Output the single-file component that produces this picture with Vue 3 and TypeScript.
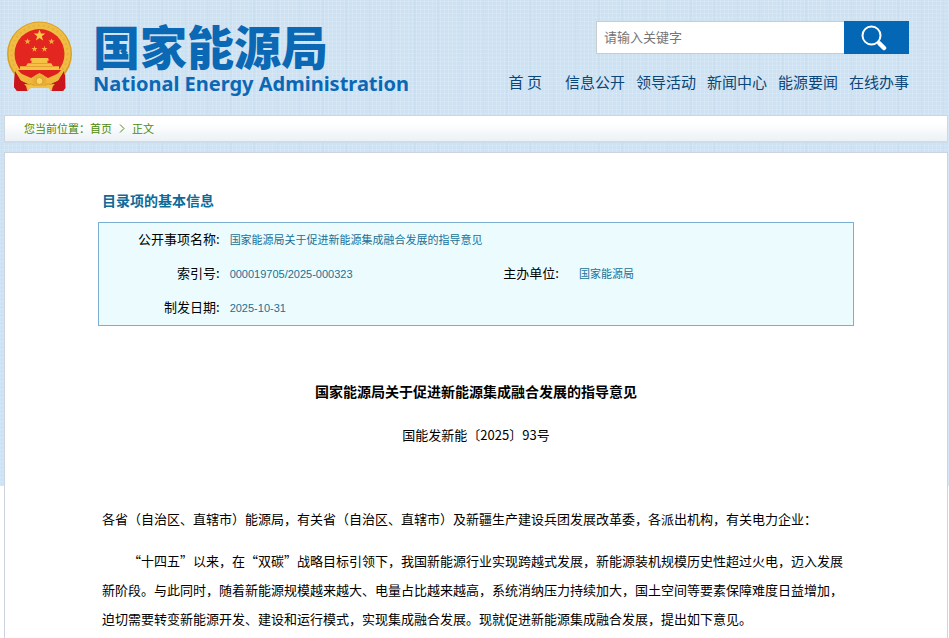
<script setup lang="ts">
import { ref } from 'vue'

interface Fact {
  label: string
  value: string
}

const keyword = ref('')

const navItems: string[] = ['首 页', '信息公开', '领导活动', '新闻中心', '能源要闻', '在线办事']

const factRows: Fact[][] = [
  [{ label: '公开事项名称:', value: '国家能源局关于促进新能源集成融合发展的指导意见' }],
  [
    { label: '索引号:', value: '000019705/2025-000323' },
    { label: '主办单位:', value: '国家能源局' },
  ],
  [{ label: '制发日期:', value: '2025-10-31' }],
]

const star = 'M0 -10 L2.4 -3.2 L9.5 -3.1 L3.8 1.2 L5.9 8.1 L0 4 L-5.9 8.1 L-3.8 1.2 L-9.5 -3.1 L-2.4 -3.2 Z'
const smallStars = [
  { x: 20.5, y: 20.5 },
  { x: 44.5, y: 20.5 },
  { x: 27.5, y: 28 },
  { x: 37.5, y: 28 },
]
</script>

<template>
  <div class="page" lang="zh-CN">
    <header class="header">
      <a class="brand" href="#">
        <svg class="emblem" viewBox="0 0 66 72" aria-hidden="true">
          <path d="M8 50 L58 50 L58.500 67 L56 70 L47 70 L45 67 L21 67 L19 70 L10 70 L7 66 Z" fill="#c9151b" />
          <path d="M12 55 L11 69 M17 59 L16 69 M54 55 L55 69 M49 59 L50 69" stroke="#97140f" stroke-width="1" />
          <circle cx="32.500" cy="33" r="32.500" fill="#d9a12a" />
          <circle cx="32.500" cy="32.500" r="31" fill="#f0bd43" />
          <circle cx="32.500" cy="32.500" r="28" fill="none" stroke="#e6b03c" stroke-width="2" stroke-dasharray="2 3" />
          <circle cx="32.500" cy="33" r="25" fill="#e3261f" />
          <path :d="star" transform="translate(32.5 14.5) scale(.61)" fill="#f7cd46" />
          <path
            v-for="(s, i) in smallStars"
            :key="i"
            :d="star"
            :transform="`translate(${s.x} ${s.y}) scale(.33)`"
            fill="#f7b23c"
          />
          <path d="M24 37 H41 L42 39.500 H40.500 V42 H44 L46 45 H52 V49 H13 V45 H19 L21 42 H24.500 V39.500 H23 Z" fill="#f5c246" />
          <path d="M13 45.500 H52 M21 42.500 H44" stroke="#e3a035" stroke-width="1" />
          <path d="M11 49 H54 L49 56 L41 60 H24 L16 56 Z" fill="#dc211d" />
          <path d="M9 48 L15 53 L24 57 L32.500 52 L41 57 L50 53 L56 48 L52 59 L43 63 L39 61 L26 61 L22 63 L13 59 Z" fill="#efb83d" />
          <path d="M8 50 L14 60 L23 64 L21 70 L10 70 L7 66 Z M57 50 L51 60 L42 64 L44 70 L56 70 L58 66 Z" fill="#c9151b" />
          <circle cx="32.500" cy="60" r="7" fill="#e9ad34" />
          <circle cx="32.500" cy="60" r="3.500" fill="#f8d764" stroke="#dc9b2e" stroke-width="1" />
          <path d="M17 63 Q25 63 28 65 H37 Q40 63 48 63 Q45 65 45 70 L41 67 H24 L20 70 Q20 65 17 63 Z" fill="#f2c044" />
        </svg>
        <span class="brand-text">
          <strong class="brand-name">国家能源局</strong>
          <span class="brand-en">National Energy Administration</span>
        </span>
      </a>

      <div class="tools">
        <form class="search" role="search" @submit.prevent>
          <input v-model="keyword" class="search-input" type="text" placeholder="请输入关键字" aria-label="请输入关键字" />
          <button class="search-button" type="submit" aria-label="搜索">
            <svg class="search-icon" viewBox="0 0 26 26" aria-hidden="true">
              <circle cx="10.500" cy="10.500" r="9" fill="none" stroke="#fff" stroke-width="2" />
              <path d="M17 17 L19 19" stroke="#fff" stroke-width="2" />
              <path d="M18.500 18.500 L23 23" stroke="#fff" stroke-width="4.500" stroke-linecap="round" />
            </svg>
          </button>
        </form>
        <nav class="nav">
          <a v-for="item in navItems" :key="item" class="nav-link" href="#">{{ item }}</a>
        </nav>
      </div>
    </header>

    <div class="crumbs">
      <span>您当前位置：</span><a href="#">首页</a>
      <svg class="crumb-sep" viewBox="0 0 6 9" aria-hidden="true">
        <path d="M1 0.500 L5 4.500 L1 8.500" fill="none" stroke="currentColor" />
      </svg>
      <a href="#">正文</a>
    </div>

    <main class="panel">
      <h2 class="section-title">目录项的基本信息</h2>
      <table class="facts">
        <colgroup>
          <col class="col-label" />
          <col class="col-value" />
          <col class="col-label-second" />
          <col />
        </colgroup>
        <tbody>
          <tr v-for="(row, r) in factRows" :key="r">
            <template v-for="fact in row" :key="fact.label">
              <th scope="row">{{ fact.label }}</th>
              <td :colspan="row.length === 1 ? 3 : 1">{{ fact.value }}</td>
            </template>
          </tr>
        </tbody>
      </table>

      <article class="article">
        <h1 class="article-title">国家能源局关于促进新能源集成融合发展的指导意见</h1>
        <p class="doc-number">国能发新能〔2025〕93号</p>
        <p class="addressee">各省（自治区、直辖市）能源局，有关省（自治区、直辖市）及新疆生产建设兵团发展改革委，各派出机构，有关电力企业：</p>
        <p class="paragraph">“十四五”以来，在“双碳”战略目标引领下，我国新能源行业实现跨越式发展，新能源装机规模历史性超过火电，迈入发展新阶段。与此同时，随着新能源规模越来越大、电量占比越来越高，系统消纳压力持续加大，国土空间等要素保障难度日益增加，迫切需要转变新能源开发、建设和运行模式，实现集成融合发展。现就促进新能源集成融合发展，提出如下意见。</p>
      </article>
    </main>
  </div>
</template>

<style>
body {
  margin: 0;
  background: #fff;
}
</style>

<style scoped>
.page {
  box-sizing: border-box;
  display: flex;
  flex-direction: column;
  min-height: 100vh;
  padding: 0 1px 0 4px;
  font-family: "Noto Sans CJK SC", "Liberation Sans", sans-serif;
  font-size: 13px;
  color: #000;
  text-spacing-trim: space-all;
  background:
    repeating-linear-gradient(90deg, rgba(255, 255, 255, 0.14) 0 1px, transparent 1px 4px),
    repeating-linear-gradient(0deg, rgba(255, 255, 255, 0.12) 0 1px, transparent 1px 4px),
    repeating-linear-gradient(90deg, rgba(150, 190, 225, 0.08) 0 2px, transparent 2px 23px),
    linear-gradient(#cee1f1, #cce4f7);
  background-size: 100% 486px;
  background-repeat: no-repeat;
}

a {
  color: inherit;
  text-decoration: none;
}

.header {
  display: flex;
  justify-content: space-between;
  align-items: flex-start;
  box-sizing: border-box;
  height: 115px;
  padding: 21px 39px 0 3px;
}

.brand {
  display: flex;
  gap: 20px;
  color: #0a68b5;
}

.emblem {
  width: 66px;
  height: 72px;
}

.brand-text {
  display: flex;
  flex-direction: column;
}

.brand-name {
  font-size: 47px;
  font-weight: 900;
  line-height: 48px;
}

.brand-en {
  font-family: "Noto Sans", "Liberation Sans", sans-serif;
  font-size: 20px;
  font-weight: 700;
  line-height: 30px;
  white-space: nowrap;
}

.tools {
  display: flex;
  flex-direction: column;
  align-items: flex-end;
  gap: 17px;
}

.search {
  display: flex;
}

.search-input {
  box-sizing: border-box;
  width: 248px;
  height: 33px;
  padding: 0 7px 2px;
  border: 1px solid #c8cdd2;
  border-right: 0;
  border-radius: 0;
  font: inherit;
  background: #fff;
  outline: none;
}

.search-input::placeholder {
  color: #757575;
  opacity: 1;
}

.search-button {
  display: flex;
  align-items: center;
  justify-content: center;
  width: 65px;
  height: 33px;
  padding: 0 5px 0 0;
  border: 0;
  background: #0467b5;
  cursor: pointer;
}

.search-icon {
  width: 26px;
  height: 26px;
}

.nav {
  display: flex;
  gap: 11px;
  font-size: 15px;
  line-height: 22px;
  color: #0b4678;
  white-space: nowrap;
}

.nav-link:first-child {
  padding-right: 12px;
}

.crumbs {
  display: flex;
  align-items: center;
  padding: 0 19px;
  border: 1px solid #cfd6e2;
  border-bottom: 2px solid #cddcea;
  font-size: 11px;
  line-height: 25px;
  color: #4a8a08;
  background: linear-gradient(#fff 30%, #ebf1f5);
}

.crumb-sep {
  width: 6px;
  height: 9px;
  margin: 0 7px;
}

.panel {
  flex: 1;
  margin-top: 9px;
  padding: 35px 93px 0;
  border: 1px solid #cdd3df;
  border-bottom: 0;
  background: #fff;
}

.section-title {
  margin: 0 4px 10px;
  font-size: 14px;
  line-height: 24px;
  color: #0f6a98;
}

.facts {
  width: 100%;
  table-layout: fixed;
  border: 1px solid #7aaed2;
  border-collapse: separate;
  border-spacing: 0;
  background: #ecfcfe;
}

.col-label {
  width: 16%;
}

.col-value {
  width: 36%;
}

.col-label-second {
  width: 9%;
}

.facts th,
.facts td {
  box-sizing: border-box;
  height: 34px;
  padding: 0;
  text-align: left;
  font-weight: 400;
  line-height: 20px;
  white-space: nowrap;
}

.facts th {
  padding-bottom: 2px;
  text-align: right;
}

.facts td {
  padding-left: 10px;
  font-family: "Liberation Sans", "Noto Sans CJK SC", sans-serif;
  font-size: 11px;
  color: #1a7096;
}

.facts td:nth-child(4) {
  padding-left: 20px;
}

.article {
  padding: 53px 4px 0;
}

.article-title {
  margin: 0;
  font-size: 14px;
  line-height: 24px;
  text-align: center;
}

.doc-number {
  margin: 20px 0 0;
  line-height: 24px;
  text-align: center;
}

.addressee {
  margin: 57px 0 0;
  line-height: 29px;
}

.paragraph {
  margin: 13px 0 0;
  line-height: 29px;
  text-indent: 2em;
}
</style>
